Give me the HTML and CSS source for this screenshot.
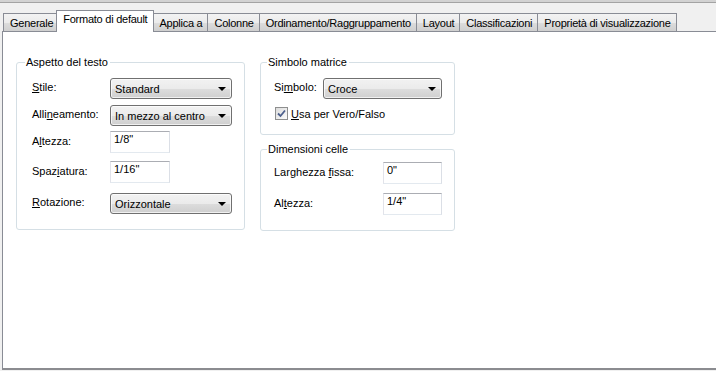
FILE: index.html
```html
<!DOCTYPE html>
<html lang="it">
<head>
    <meta charset="UTF-8">
    <title>Proprietà matrice</title>
    <link rel="stylesheet" href="styles.css">
</head>
<body>

<div class="topbar"></div>

<div class="tabctl">
    <!-- Tab strip -->
    <div class="tabs">
        <div class="tab">Generale</div>
        <div class="tab active">Formato di default</div>
        <div class="tab">Applica a</div>
        <div class="tab">Colonne</div>
        <div class="tab">Ordinamento/Raggruppamento</div>
        <div class="tab">Layout</div>
        <div class="tab">Classificazioni</div>
        <div class="tab">Proprietà di visualizzazione</div>
    </div>

    <!-- Tab page -->
    <div class="panel">
        <fieldset class="group group-text">
            <legend>Aspetto del testo</legend>
            <div class="row row-first">
                <label class="lbl"><u>S</u>tile:</label>
                <div class="combo"><span>Standard</span><i class="arrow"></i></div>
            </div>
            <div class="row row-align">
                <label class="lbl">Alli<u>n</u>eamento:</label>
                <div class="combo"><span>In mezzo al centro</span><i class="arrow"></i></div>
            </div>
            <div class="row row-height">
                <label class="lbl">A<u>l</u>tezza:</label>
                <div class="textbox">1/8"</div>
            </div>
            <div class="row row-spacing">
                <label class="lbl">Spaz<u>i</u>atura:</label>
                <div class="textbox">1/16"</div>
            </div>
            <div class="row row-rotation">
                <label class="lbl"><u>R</u>otazione:</label>
                <div class="combo"><span>Orizzontale</span><i class="arrow"></i></div>
            </div>
        </fieldset>

        <div class="col-right">
            <fieldset class="group group-symbol">
                <legend>Simbolo matrice</legend>
                <div class="row row-first">
                    <label class="lbl lbl-short">Si<u>m</u>bolo:</label>
                    <div class="combo"><span>Croce</span><i class="arrow"></i></div>
                </div>
                <div class="check-row">
                    <span class="checkbox">
                        <svg width="9" height="9" viewBox="0 0 9 9"><path d="M1 4.5 L3.5 7 L8 1.5" fill="none" stroke="#4c5f8c" stroke-width="1.8"/></svg>
                    </span>
                    <span><u>U</u>sa per Vero/Falso</span>
                </div>
            </fieldset>

            <fieldset class="group group-cells">
                <legend>Dimensioni celle</legend>
                <div class="row row-cell1">
                    <label class="lbl lbl-wide">Larghezza <u>f</u>issa:</label>
                    <div class="textbox">0"</div>
                </div>
                <div class="row row-cell2">
                    <label class="lbl lbl-wide">Al<u>t</u>ezza:</label>
                    <div class="textbox">1/4"</div>
                </div>
            </fieldset>
        </div>
    </div>
</div>

</body>
</html>
```

FILE: styles.css
```css
body {
    margin: 0;
    background-color: #f0f0f0;
    font-family: "Liberation Sans", Arial, sans-serif;
    font-size: 11px;
    color: #000;
}

u {
    text-decoration: underline;
    text-underline-offset: 1px;
}

.topbar {
    height: 2px;
    background-color: #d2d2d2;
    border-bottom: 1px solid #a3a3a3;
}

/* tab strip */
.tabs {
    display: flex;
    align-items: flex-end;
    height: 28px;
    margin-left: 3px;
}

.tab {
    height: 17px;
    line-height: 18px;
    padding: 0 5px 0 6px;
    border: 1px solid #898c95;
    border-bottom: none;
    margin-left: -1px;
    background: linear-gradient(#f3f3f3, #ebebeb 50%, #dddddd 51%, #cfcfcf);
    white-space: nowrap;
    letter-spacing: -0.25px;
}

.tab:first-child {
    margin-left: 0;
}

.tab.active {
    position: relative;
    z-index: 1;
    height: 21px;
    line-height: 16px;
    margin: 0 -2px -1px -3px;
    padding: 0 6px;
    background: #fff;
}

.tab.active + .tab {
    margin-left: 0;
}

/* tab page */
.panel {
    display: flex;
    align-items: flex-start;
    gap: 15px;
    height: 336px;
    margin: 0 0 0 2px;
    width: 710px;
    padding: 0 0 0 13px;
    box-sizing: content-box;
    background-color: #fff;
    border: 1px solid #898c95;
    border-right: 2px solid #8b8c90;
    border-bottom: 2px solid #8b8c90;
}

.group {
    margin: 0;
    border: 1px solid #d5dfe5;
    border-radius: 3px;
    padding: 0 12px 0 15px;
    min-width: 0;
}

.group legend {
    margin-left: -7px;
    padding: 0 2px 0 1px;
    line-height: 13px;
    height: 13px;
}

.group-text {
    width: 200px;
    height: 172px;
    margin-top: 24px;
}

.col-right {
    display: flex;
    flex-direction: column;
    margin-top: 24px;
}

.group-symbol {
    width: 168px;
    height: 77px;
    padding-left: 13px;
}

.group-cells {
    width: 168px;
    height: 86px;
    padding-left: 13px;
    margin-top: 8px;
}

.row {
    display: flex;
    align-items: center;
}

.row-first { margin-top: 9px; }
.row-align { margin-top: 6px; }
.row-height { margin-top: 5px; }
.row-spacing { margin-top: 8px; }
.row-rotation { margin-top: 10px; }
.row-cell1 { margin-top: 6px; }
.row-cell2 { margin-top: 9px; }

.lbl {
    width: 78px;
    flex-shrink: 0;
    margin-top: -3px;
}

.lbl-short {
    width: 49px;
}

.lbl-wide {
    width: 109px;
}

/* combo box */
.combo {
    display: flex;
    align-items: center;
    justify-content: space-between;
    width: 115px;
    height: 19px;
    padding: 0 3px 0 4px;
    border: 1px solid #707070;
    border-radius: 3px;
    background: linear-gradient(#f2f2f2, #ebebeb 50%, #dddddd 51%, #cfcfcf);
    box-shadow: inset 0 0 0 1px rgba(255, 255, 255, 0.7);
}

.combo span {
    padding-top: 1px;
}

.arrow {
    width: 0;
    height: 0;
    margin-right: 2px;
    border-left: 4px solid transparent;
    border-right: 4px solid transparent;
    border-top: 4px solid #000;
}

/* text box */
.textbox {
    width: 52px;
    height: 20px;
    line-height: 14px;
    padding: 0 3px;
    border: 1px solid #abadb3;
    border-left-color: #e2e3ea;
    border-right-color: #dbdfe6;
    border-bottom-color: #e3e9ef;
    background: #fff;
}

/* checkbox */
.check-row {
    display: flex;
    align-items: center;
    gap: 3px;
    margin-top: 8px;
    margin-left: 1px;
}

.checkbox {
    display: flex;
    align-items: center;
    justify-content: center;
    width: 11px;
    height: 11px;
    border: 1px solid #8e8f8f;
    background: linear-gradient(135deg, #dcdcdc, #fbfbfb);
}
```
